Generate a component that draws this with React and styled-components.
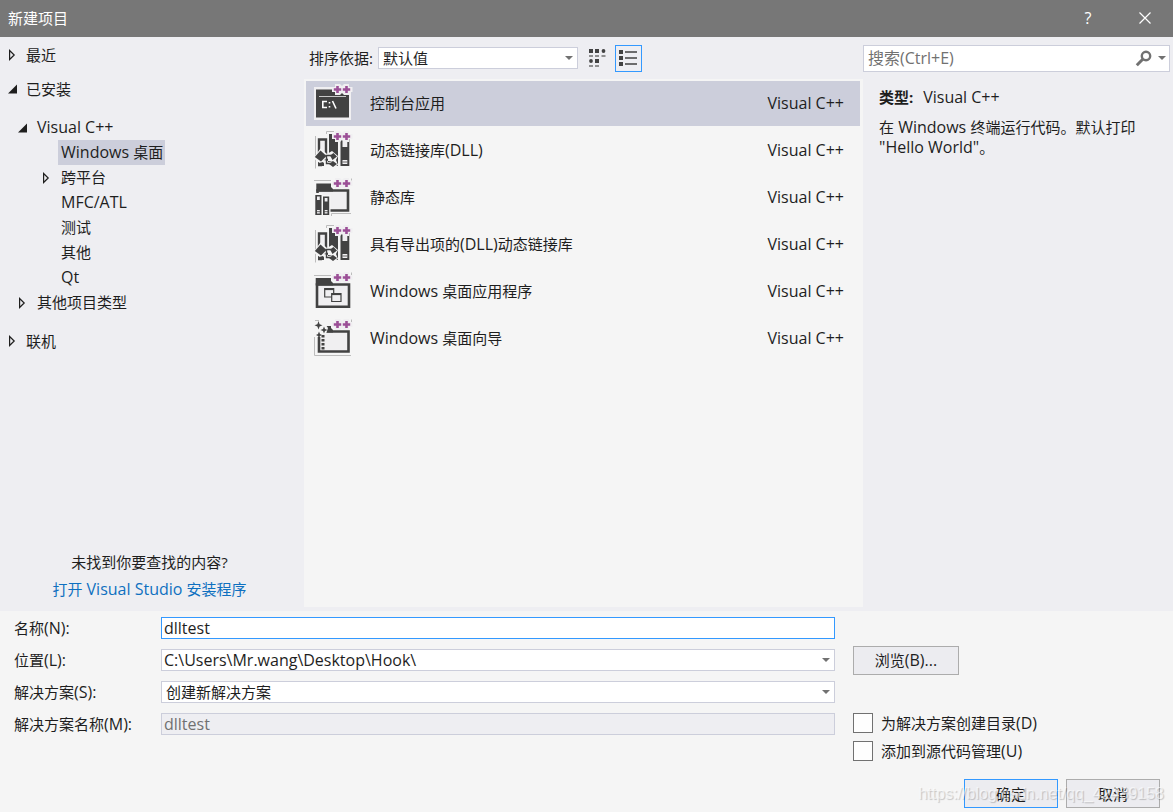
import React, { useState } from "react";
import styled, { createGlobalStyle } from "styled-components";

const GlobalStyle = createGlobalStyle`
  * {
    box-sizing: border-box;
  }

  body {
    margin: 0;
    color: #1e1e1e;
    background: #f5f5f5;
  }

  body, button, input, select {
    font-family: "Open Sans", "Noto Sans CJK SC", sans-serif;
    font-size: 15px;
    line-height: 20px;
  }
`;

// latin glyphs look small next to the chinese ones at the same size
const Latin = styled.span`
  font-size: 16px;
`;

const Dialog = styled.div`
  position: relative;
  display: flex;
  flex-direction: column;
  min-height: 100vh;
`;

const TitleBar = styled.header`
  display: flex;
  align-items: center;
  height: 37px;
  padding: 0 8px;
  color: #fff;
  background: #777;
`;

const Title = styled.h1`
  flex: 1;
  margin: 0;
  padding-bottom: 2px;
  font-size: 15px;
  font-weight: 400;
`;

const TitleButton = styled.button`
  display: flex;
  align-items: center;
  justify-content: center;
  width: 40px;
  height: 37px;
  margin-left: 17px;
  padding: 0 0 2px;
  border: 0;
  color: #fff;
  background: none;
`;

const Body = styled.main`
  flex: 1;
  display: grid;
  grid-template-columns: 304px 1fr 310px;
  background: #eeeef2;
`;

const Sidebar = styled.nav`
  display: flex;
  flex-direction: column;
  padding: 1px 5px 8px 0;
`;

const Tree = styled.ul`
  flex: 1;
  margin: 0;
  padding: 0;
  list-style: none;
`;

const SubTree = styled(Tree)`
  margin: ${(p) => (p.$spaced ? "9px 0" : "0")};
`;

const TreeRow = styled.div`
  display: flex;
  align-items: center;
  height: ${(p) => (p.$level === 0 ? 34 : 25)}px;
  padding-left: ${(p) => [8, 18, 42][p.$level]}px;
`;

const ArrowSlot = styled.span`
  display: flex;
  width: ${(p) => (p.$level === 0 ? 15 : 16)}px;
`;

const TreeLabel = styled.span`
  padding: 0 2px 0 3px;
  line-height: 25px;
  background: ${(p) => (p.$selected ? "#cccedb" : "none")};
`;

const NotFound = styled.div`
  text-align: center;
  line-height: 27px;
`;

const Link = styled.a`
  display: block;
  color: #0e70c0;
  text-decoration: none;
`;

const Center = styled.section`
  display: flex;
  flex-direction: column;
  padding-bottom: 4px;
`;

const Toolbar = styled.div`
  display: flex;
  align-items: center;
  height: 42px;
  padding-left: 5px;
`;

const SortLabel = styled.label`
  width: 69px;
`;

const ViewButton = styled.button`
  display: flex;
  align-items: center;
  justify-content: center;
  width: 27px;
  height: 27px;
  margin-left: ${(p) => (p.$active ? 4 : 6)}px;
  padding: 0;
  border: 1px solid ${(p) => (p.$active ? "#3399ff" : "transparent")};
  background: none;
`;

const SelectWrap = styled.span`
  position: relative;
  display: block;
  width: ${(p) => p.$width || "100%"};
`;

const Select = styled.select`
  display: block;
  width: 100%;
  height: 22px;
  padding: 0 20px 0 ${(p) => (p.$latin ? 2 : 4)}px;
  border: 1px solid #cccedb;
  border-radius: 0;
  color: #1e1e1e;
  font-size: ${(p) => (p.$latin ? 16 : 15)}px;
  background: #fff;
  appearance: none;
`;

const SelectArrow = styled.svg`
  position: absolute;
  top: 9px;
  right: 5px;
  pointer-events: none;
`;

const TemplateList = styled.ul`
  flex: 1;
  display: flex;
  flex-direction: column;
  gap: 2px;
  margin: 0;
  padding: 2px 3px 2px 2px;
  list-style: none;
  background: #f5f5f5;
`;

const Template = styled.button`
  display: flex;
  align-items: center;
  gap: 16px;
  width: 100%;
  height: 45px;
  padding: 0 16px 0 8px;
  border: 0;
  color: #1e1e1e;
  text-align: left;
  background: ${(p) => (p.$selected ? "#cccedb" : "none")};
`;

const TemplateText = styled.span`
  flex: ${(p) => (p.$grow ? 1 : "none")};
  padding-bottom: 2px;
`;

const Details = styled.aside`
  padding-right: 3px;
`;

const SearchRow = styled.div`
  display: flex;
  align-items: center;
  height: 42px;
`;

const SearchBox = styled.div`
  flex: 1;
  display: flex;
  align-items: center;
  gap: 5px;
  height: 27px;
  padding-right: 3px;
  border: 1px solid #cccedb;
  background: #fff;
`;

const SearchInput = styled.input`
  flex: 1;
  min-width: 0;
  height: 25px;
  padding: 0 4px;
  border: 0;
  outline: 0;
  font-size: 16px;
  background: none;

  &::placeholder {
    color: #717171;
    opacity: 1;
  }
`;

const Description = styled.div`
  padding: 8px 16px;

  p {
    margin: 0 0 10px;
  }

  strong {
    margin-right: 6px;
  }
`;

const Footer = styled.form`
  padding: 0 13px 4px 14px;
  background: #f5f5f5;
`;

const Fields = styled.div`
  display: grid;
  grid-template-columns: 147px 1fr 325px;
  grid-template-rows: 33px repeat(3, 32px) auto;
  align-items: center;
`;

const TextInput = styled.input`
  width: 100%;
  height: 22px;
  padding: 0 2px;
  border: 1px solid ${(p) => (p.$focused ? "#3399ff" : "#cccedb")};
  outline: 0;
  color: #1e1e1e;
  font-size: 16px;
  background: #fff;

  &:disabled {
    color: #717171;
    background: #eeeef2;
  }
`;

const Button = styled.button`
  width: ${(p) => p.$width}px;
  height: 29px;
  padding: 0;
  border: 1px solid ${(p) => (p.$primary ? "#3399ff" : "#acacac")};
  color: #1e1e1e;
  background: #ececf0;
`;

const SideCell = styled.div`
  grid-column: 3;
  grid-row: 2;
  display: flex;
  padding-left: 18px;
`;

const Checks = styled(SideCell)`
  grid-row: 4 / span 2;
  align-self: start;
  flex-direction: column;
  gap: 4px;
  padding-top: 3px;
`;

const Check = styled.label`
  display: flex;
  align-items: center;
  gap: 8px;
  height: 24px;
`;

const CheckBox = styled.input`
  width: 20px;
  height: 20px;
  margin: 0;
  border: 1px solid #717171;
  background: #fefefe;
  appearance: none;

  &:checked {
    background: #717171;
  }
`;

const Actions = styled.div`
  display: flex;
  justify-content: flex-end;
  gap: 8px;
  margin: 16px 0 0;
`;

const Watermark = styled.div`
  position: absolute;
  right: 9px;
  bottom: 8px;
  color: rgba(255, 255, 255, 0.6);
  font-family: "Liberation Sans", sans-serif;
  font-size: 16px;
  text-shadow: 1px 1px 1px rgba(0, 0, 0, 0.2);
  pointer-events: none;
`;

const DARK = "#424242";
const LIGHT = "#f0eff1";

function Text({ children }) {
  return children
    .split(/([\x20-\x7e]*[A-Za-z][\x20-\x7e]*)/)
    .map((part, i) => (i % 2 ? <Latin key={i}>{part}</Latin> : part));
}

function TreeArrow({ open }) {
  return (
    <svg width="10" height="12" viewBox="0 0 10 12">
      {open ? (
        <path d="M9 1.5V10.500H0z" fill="#1e1e1e" />
      ) : (
        <path d="M1.600 1.500V10.500L6.200 6z" fill="none" stroke="#1e1e1e" strokeWidth="1.200" />
      )}
    </svg>
  );
}

function DropArrow() {
  return (
    <SelectArrow width="8" height="4" viewBox="0 0 8 4">
      <path d="M0 0H8L4 4z" fill="#717171" />
    </SelectArrow>
  );
}

function PlusPlus() {
  return (
    <g>
      <path d="M21 3H26L28 5L30 3H35V6H38.500V11H35V14H30L28 12L26 14H21V11H18V6H21z" fill={LIGHT} />
      <path
        d="M23.500 5V12M19.800 8.500H27.200M32.500 5V12M28.800 8.500H36.200"
        stroke="#9b4f96"
        strokeWidth="2.600"
      />
    </g>
  );
}

function ConsoleIcon() {
  return (
    <>
      <path d="M0 6H37V39H0z" fill={LIGHT} />
      <path d="M2 8.500H35V36.500H2z" fill={DARK} />
      <path d="M5 15.500H32" stroke="#c8c8c8" />
      <path
        d="M13 20.500H8.800V26.500H13M15.500 21V22.500M15.500 25V26.500M18.500 20L22 27.500"
        fill="none"
        stroke="#fff"
        strokeWidth="1.600"
      />
    </>
  );
}

function DllIcon() {
  return (
    <>
      <path d="M1.500 8V40.500M12.500 6V3.500H20" fill="none" stroke="#bcbcbc" />
      <path d="M5 11.500H12V28H5z" fill={LIGHT} stroke={DARK} strokeWidth="2.400" />
      <path d="M15 6H24V38H15zM26.500 11H35.300V38H26.500z" fill={DARK} />
      <path d="M28.500 11H33.300V19H28.500zM28.500 32H33.300V36H28.500z" fill={LIGHT} />
      <path d="M28.500 34H33.300" stroke={DARK} strokeWidth="0.800" />
      <path d="M4 30H10V38H4z" fill={DARK} />
      <path d="M6.500 20.500L13 26L18 23L24 28L22 32L24 37L18 40L12 38L9 34L5 35L-0.500 30z" fill="#f5f5f5" />
      <path d="M6.500 22.500L12.500 28L7 33.500L0.800 29z" fill={DARK} />
      <path d="M10 32L14 30.500V34H19M16 27.500L19.500 25L23 28.500L18.500 32zM15 36L19 33L23 36L19 39z" fill={DARK} />
      <path d="M11.500 27.500H17M12.500 28V35.500H17" fill="none" stroke={DARK} strokeWidth="1.400" />
      <path d="M4 34L8 36.500V38.300H4z" fill={DARK} />
    </>
  );
}

function StaticLibIcon() {
  return (
    <>
      <path d="M0 5.500H17M17.500 41V38.500H37M37.500 5.500V3.500" fill="none" stroke="#bcbcbc" />
      <path d="M3.500 15.500H34V35.500H3.500z" fill={LIGHT} stroke={DARK} strokeWidth="2.600" />
      <path d="M2.300 8.500H17V12L19 14V16.500H2.300z" fill={DARK} />
      <path d="M0 18H8.500V20H16.500V41H0z" fill="#f5f5f5" />
      <path d="M1.300 20H7.500V40H1.300zM9 21.500H15.200V40H9z" fill={DARK} />
      <path d="M3 21.500H5.800V25H3zM10.700 23H13.500V26.500H10.700zM3 35H5.800V38.500H3zM10.700 35H13.500V38.500H10.700z" fill={LIGHT} />
      <path d="M2 36.700H6.500M10 36.700H14.500" stroke={DARK} strokeWidth="0.800" />
    </>
  );
}

function DesktopAppIcon() {
  return (
    <>
      <path d="M0 6.500H17M37.500 6.500V3.500" fill="none" stroke="#bcbcbc" />
      <path d="M3 15.500H35V37.700H3z" fill={LIGHT} stroke={DARK} strokeWidth="2.600" />
      <path d="M1.700 9H17V12L19 14V16.500H1.700z" fill={DARK} />
      <path d="M10.700 19.500H19.700V28H10.700z" fill={LIGHT} stroke={DARK} strokeWidth="1.200" />
      <path d="M10.700 20.300H19.700" stroke={DARK} strokeWidth="1.600" />
      <path d="M17.700 24.500H27V32.500H17.700z" fill={LIGHT} stroke={DARK} strokeWidth="1.200" />
      <path d="M17.700 25.300H27" stroke={DARK} strokeWidth="1.600" />
    </>
  );
}

function WizardIcon() {
  return (
    <>
      <path d="M0.500 17V39.500H37M1 4.500H5M37.500 6.500V3.500" fill="none" stroke="#bcbcbc" />
      <path d="M5 15.500H34.500V35.500H5z" fill={LIGHT} stroke={DARK} strokeWidth="2.600" />
      <path d="M12 10H17V12L19 14V16.500H12z" fill={DARK} />
      <path d="M0 5H9L14 12L12 18H7V21H0z" fill="#f5f5f5" />
      <path
        d="M4.500 5L5.600 8.200L8.500 9.300L5.600 10.400L4.500 13.500L3.400 10.400L0.500 9.300L3.400 8.200zM10 10.500L11 13L13.500 14L11 15L10 17.500L9 15L6.500 14L9 13zM5 15.500L6 18L8 19L6 20L5 22.500L4 20L2 19L4 18z"
        fill={DARK}
      />
      <path d="M9 19V34" stroke={DARK} strokeWidth="3" strokeDasharray="2.500 1.500" />
    </>
  );
}

const TREE = [
  { name: "最近" },
  {
    name: "已安装",
    children: [
      {
        name: "Visual C++",
        children: [
          { name: "Windows 桌面", leaf: true },
          { name: "跨平台" },
          { name: "MFC/ATL", leaf: true },
          { name: "测试", leaf: true },
          { name: "其他", leaf: true },
          { name: "Qt", leaf: true },
        ],
      },
      { name: "其他项目类型" },
    ],
  },
  { name: "联机" },
];

const TEMPLATES = [
  { name: "控制台应用", Icon: ConsoleIcon },
  { name: "动态链接库(DLL)", Icon: DllIcon },
  { name: "静态库", Icon: StaticLibIcon },
  { name: "具有导出项的(DLL)动态链接库", Icon: DllIcon },
  { name: "Windows 桌面应用程序", Icon: DesktopAppIcon },
  { name: "Windows 桌面向导", Icon: WizardIcon },
];

function TreeNode({ node, level }) {
  return (
    <li>
      <TreeRow $level={level}>
        <ArrowSlot $level={level}>
          {!node.leaf && <TreeArrow open={!!node.children} />}
        </ArrowSlot>
        <TreeLabel $selected={node.name === "Windows 桌面"}>
          <Text>{node.name}</Text>
        </TreeLabel>
      </TreeRow>
      {node.children && (
        <SubTree $spaced={level === 0}>
          {node.children.map((child) => (
            <TreeNode key={child.name} node={child} level={level + 1} />
          ))}
        </SubTree>
      )}
    </li>
  );
}

export default function App() {
  const [selected, setSelected] = useState(0);
  const [name, setName] = useState("dlltest");

  return (
    <Dialog>
      <GlobalStyle />
      <TitleBar>
        <Title>新建项目</Title>
        <TitleButton aria-label="帮助">
          <Latin>?</Latin>
        </TitleButton>
        <TitleButton aria-label="关闭">
          <svg width="12" height="12" viewBox="0 0 12 12">
            <path d="M0.500 0.500L11.500 11.500M11.500 0.500L0.500 11.500" stroke="#fff" strokeWidth="1.200" />
          </svg>
        </TitleButton>
      </TitleBar>

      <Body>
        <Sidebar>
          <Tree>
            {TREE.map((node) => (
              <TreeNode key={node.name} node={node} level={0} />
            ))}
          </Tree>
          <NotFound>
            未找到你要查找的内容?
            <Link href="#installer">
              <Text>打开 Visual Studio 安装程序</Text>
            </Link>
          </NotFound>
        </Sidebar>

        <Center>
          <Toolbar>
            <SortLabel htmlFor="sort">排序依据:</SortLabel>
            <SelectWrap $width="200px">
              <Select id="sort">
                <option>默认值</option>
              </Select>
              <DropArrow />
            </SelectWrap>
            <ViewButton aria-label="小图标">
              <svg width="17" height="18" viewBox="0 0 17 18">
                <path
                  d="M0 0H4V4H0zM6 0H10V4H6zM6 10H10V14H6z"
                  fill={DARK}
                />
                <circle cx="14.500" cy="2" r="1.900" fill={DARK} />
                <circle cx="2" cy="12" r="1.900" fill={DARK} />
                <path
                  d="M0 7H4M6 7H10M12.500 7H16.500M0 17H4M6 17H10"
                  stroke="#717171"
                  strokeWidth="1.500"
                />
              </svg>
            </ViewButton>
            <ViewButton $active aria-label="中等图标">
              <svg width="19" height="17" viewBox="0 0 19 17">
                <path d="M0 0H4V4H0zM0 6H4V10H0zM0 12H4V16H0z" fill={DARK} />
                <path d="M6 2H18M6 8H18M6 14H18" stroke={DARK} strokeWidth="1.300" />
              </svg>
            </ViewButton>
          </Toolbar>
          <TemplateList>
            {TEMPLATES.map(({ name: label, Icon }, i) => (
              <li key={label}>
                <Template $selected={i === selected} onClick={() => setSelected(i)}>
                  <svg width="40" height="45" viewBox="0 0 40 45">
                    <Icon />
                    <PlusPlus />
                  </svg>
                  <TemplateText $grow>
                    <Text>{label}</Text>
                  </TemplateText>
                  <TemplateText>
                    <Latin>Visual C++</Latin>
                  </TemplateText>
                </Template>
              </li>
            ))}
          </TemplateList>
        </Center>

        <Details>
          <SearchRow>
            <SearchBox>
              <SearchInput aria-label="搜索" placeholder="搜索(Ctrl+E)" />
              <svg width="18" height="17" viewBox="0 0 18 17">
                <circle cx="11" cy="6" r="4.200" fill="none" stroke="#717171" strokeWidth="2.400" />
                <path d="M8 9L1.800 15.200" stroke="#717171" strokeWidth="3" />
              </svg>
              <svg width="8" height="4" viewBox="0 0 8 4">
                <path d="M0 0H8L4 4z" fill="#717171" />
              </svg>
            </SearchBox>
          </SearchRow>
          <Description>
            <p>
              <strong>类型:</strong> <Latin>Visual C++</Latin>
            </p>
            <p>
              <Text>在 Windows 终端运行代码。默认打印 "Hello World"。</Text>
            </p>
          </Description>
        </Details>
      </Body>

      <Footer onSubmit={(e) => e.preventDefault()}>
        <Fields>
          <label htmlFor="name">
            <Text>名称(N):</Text>
          </label>
          <TextInput
            id="name"
            $focused
            value={name}
            onChange={(e) => setName(e.target.value)}
          />
          <span />
          <label htmlFor="location">
            <Text>位置(L):</Text>
          </label>
          <SelectWrap>
            <Select id="location" $latin>
              <option>C:\Users\Mr.wang\Desktop\Hook\</option>
            </Select>
            <DropArrow />
          </SelectWrap>
          <SideCell>
            <Button type="button" $width={106}>
              <Text>浏览(B)...</Text>
            </Button>
          </SideCell>
          <label htmlFor="solution">
            <Text>解决方案(S):</Text>
          </label>
          <SelectWrap>
            <Select id="solution">
              <option>创建新解决方案</option>
            </Select>
            <DropArrow />
          </SelectWrap>
          <span />
          <label htmlFor="solutionName">
            <Text>解决方案名称(M):</Text>
          </label>
          <TextInput id="solutionName" value={name} disabled readOnly />
          <Checks>
            <Check>
              <CheckBox type="checkbox" />
              <span>
                <Text>为解决方案创建目录(D)</Text>
              </span>
            </Check>
            <Check>
              <CheckBox type="checkbox" />
              <span>
                <Text>添加到源代码管理(U)</Text>
              </span>
            </Check>
          </Checks>
        </Fields>
        <Actions>
          <Button type="submit" $primary $width={94}>
            确定
          </Button>
          <Button type="button" $width={94}>
            取消
          </Button>
        </Actions>
      </Footer>
      <Watermark>https://blog.csdn.net/qq_42489158</Watermark>
    </Dialog>
  );
}
